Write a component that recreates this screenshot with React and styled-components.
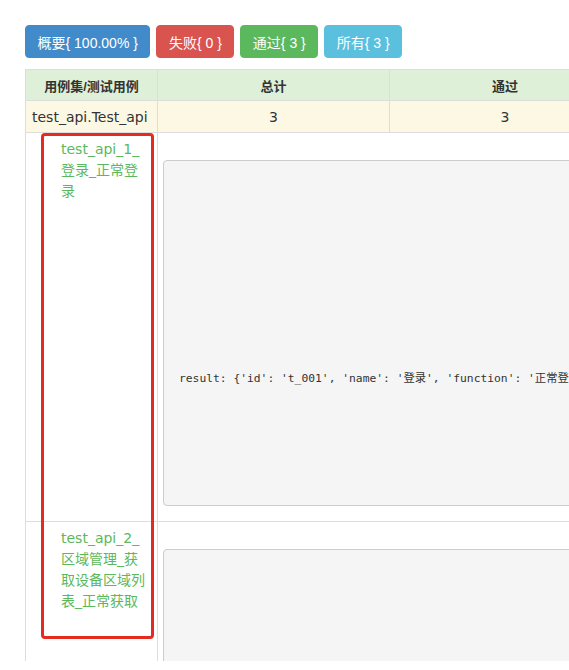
import React from "react";
import styled, { createGlobalStyle } from "styled-components";

const GlobalStyle = createGlobalStyle`
  html, body {
    margin: 0;
    padding: 0;
    overflow: hidden;
    background: #fff;
  }
  body {
    font-family: "DejaVu Sans", "Noto Sans CJK SC", sans-serif;
    color: #333;
  }
`;

const Page = styled.div`
  position: relative;
  width: 569px;
  height: 661px;
  overflow: hidden;
  padding: 25px 0 0 25px;
  box-sizing: border-box;
`;

const ButtonBar = styled.div`
  display: flex;
  gap: 6px;
  margin-bottom: 11px;
`;

const tones = {
  primary: "#428bca",
  danger: "#d9534f",
  success: "#5cb85c",
  info: "#5bc0de",
};

const FilterButton = styled.button`
  height: 33px;
  padding: 0 11.5px;
  border: 1px solid ${(p) => tones[p.$tone]};
  border-radius: 4px;
  background: ${(p) => tones[p.$tone]};
  color: #fff;
  font-family: "Liberation Sans", "Noto Sans CJK SC", sans-serif;
  font-size: 14px;
  white-space: nowrap;
  cursor: pointer;
`;

const Table = styled.table`
  border-collapse: collapse;
  table-layout: fixed;
  width: 1100px;
  font-size: 14px;
`;

const HeadRow = styled.tr`
  background: #dff0d8;
  height: 31px;
`;

const Th = styled.th`
  border: 1px solid #ddd;
  font-family: "Liberation Sans", "Noto Sans CJK SC", sans-serif;
  font-size: 13px;
  font-weight: bold;
  color: #333;
  text-align: center;
  padding: 0 6px;
`;

const SuiteRow = styled.tr`
  background: #fcf8e3;
  height: 32px;
`;

const Td = styled.td`
  border: 1px solid #ddd;
  padding: 0 6px;
  text-align: ${(p) => (p.$left ? "left" : "center")};
  font-size: 14px;
  color: #333;
  white-space: nowrap;
`;

const CaseRow = styled.tr`
  background: #fff;
`;

const CaseName = styled.td`
  border: 1px solid #ddd;
  vertical-align: top;
  padding: 6px 9px 0 35px;
  font-size: 14px;
  line-height: 21px;
  color: #5cb85c;
  word-break: normal;
`;

const DetailCell = styled.td`
  border: 1px solid #ddd;
  vertical-align: top;
  padding: 27px 0 15px 5px;
`;

const Output = styled.pre`
  margin: 0;
  height: ${(p) => p.$h}px;
  box-sizing: border-box;
  padding: ${(p) => p.$pt}px 15px 0 15px;
  background: #f5f5f5;
  border: 1px solid #ccc;
  border-radius: 4px;
  font-family: "DejaVu Sans Mono", "Noto Sans CJK SC", monospace;
  font-size: 11.3px;
  line-height: 17px;
  color: #333;
  white-space: pre;
  overflow: hidden;
`;

const Highlight = styled.div`
  position: absolute;
  left: 41px;
  top: 133px;
  width: 113px;
  height: 506px;
  box-sizing: border-box;
  border: 3px solid #e52b20;
  border-radius: 4px;
  pointer-events: none;
`;

export default function App() {
  return (
    <>
      <GlobalStyle />
      <Page>
        <ButtonBar>
          <FilterButton $tone="primary">概要{"{ 100.00% }"}</FilterButton>
          <FilterButton $tone="danger">失败{"{ 0 }"}</FilterButton>
          <FilterButton $tone="success">通过{"{ 3 }"}</FilterButton>
          <FilterButton $tone="info">所有{"{ 3 }"}</FilterButton>
        </ButtonBar>
        <Table>
          <colgroup>
            <col style={{ width: 132 }} />
            <col style={{ width: 232 }} />
            <col style={{ width: 231 }} />
            <col style={{ width: 231 }} />
            <col style={{ width: 231 }} />
            <col style={{ width: 43 }} />
          </colgroup>
          <thead>
            <HeadRow>
              <Th>用例集/测试用例</Th>
              <Th>总计</Th>
              <Th>通过</Th>
              <Th>失败</Th>
              <Th>错误</Th>
              <Th>详细</Th>
            </HeadRow>
          </thead>
          <tbody>
            <SuiteRow>
              <Td $left>test_api.Test_api</Td>
              <Td>3</Td>
              <Td>3</Td>
              <Td>0</Td>
              <Td>0</Td>
              <Td>详细</Td>
            </SuiteRow>
            <CaseRow>
              <CaseName>test_api_1_登录_正常登录</CaseName>
              <DetailCell colSpan={5}>
                <Output $h={346} $pt={209}>
                  {"result: {'id': 't_001', 'name': '登录', 'function': '正常登录', 'method': 'post'}"}
                </Output>
              </DetailCell>
            </CaseRow>
            <CaseRow>
              <CaseName>test_api_2_区域管理_获取设备区域列表_正常获取</CaseName>
              <DetailCell colSpan={5}>
                <Output $h={346} $pt={209}>
                  {"result: {'id': 't_002', 'name': '区域管理', 'function': '获取设备区域列表'}"}
                </Output>
              </DetailCell>
            </CaseRow>
          </tbody>
        </Table>
        <Highlight />
      </Page>
    </>
  );
}
